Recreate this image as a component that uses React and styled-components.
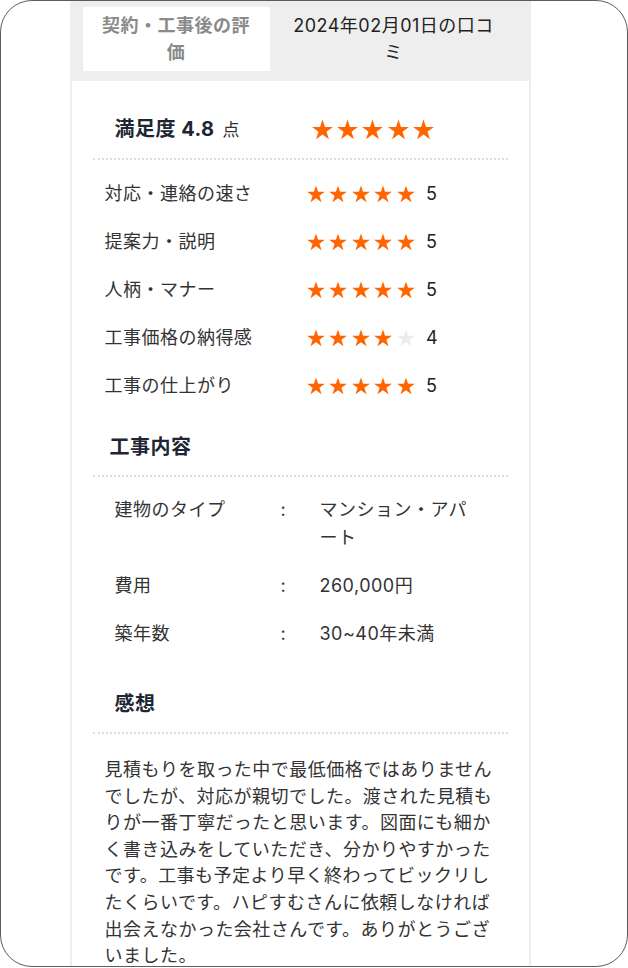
import React from "react";
import styled, { createGlobalStyle } from "styled-components";

const GlobalStyle = createGlobalStyle`
  body {
    margin: 0;
    background: #fff;
    font-family: "Inter", "Noto Sans CJK JP", sans-serif;
    letter-spacing: 0.03em;
  }
`;

const Frame = styled.div`
  box-sizing: border-box;
  width: 628px;
  height: 967px;
  border: 1.5px solid #5c5c5c;
  border-radius: 32px;
  overflow: hidden;
  background: #fff;
`;

const Column = styled.div`
  width: 461px;
  min-height: 100%;
  margin-left: 68.5px;
  background: #eeeeee;
  display: flex;
  flex-direction: column;
`;

const TabBar = styled.div`
  display: flex;
  padding: 6px 13px 0;
  margin-bottom: 10px;
`;

const Tab = styled.div`
  box-sizing: border-box;
  height: 64px;
  display: flex;
  align-items: center;
  justify-content: center;
  text-align: center;
  font-size: 18px;
  line-height: 27px;
  padding: 0 ${(p) => (p.$active ? 12 : 16)}px;
  background: ${(p) => (p.$active ? "#fff" : "transparent")};
  color: ${(p) => (p.$active ? "#8a8a8a" : "#222")};
  font-weight: ${(p) => (p.$active ? 700 : 400)};
  ${(p) => (p.$active ? "width: 187px;" : "flex: 1;")}
`;

const Card = styled.div`
  flex: 1;
  margin: 0 2px;
  padding: 0 21px;
  background: #fff;
`;

const ScoreHeader = styled.div`
  display: flex;
  align-items: center;
  padding: 34px 12px 14px 22px;
  border-bottom: 2px dotted #dcdcdc;
`;

const ScoreTitle = styled.div`
  width: 197px;
  font-size: 20px;
  line-height: 28px;
  font-weight: 700;
  color: #1e2533;
`;

const Unit = styled.span`
  margin-left: 8px;
  font-size: 17px;
  font-weight: 400;
  color: #333;
`;

const Stars = styled.div`
  display: flex;
  align-items: center;
  gap: ${(p) => p.$gap}px;
`;

const RatingList = styled.div`
  padding-top: 10px;
`;

const RatingRow = styled.div`
  display: flex;
  align-items: center;
  padding: 10px 0 10px 12px;
  font-size: 18px;
  line-height: 28px;
  color: #333;
`;

const RatingLabel = styled.div`
  width: 202px;
`;

const Score = styled.span`
  margin-left: 11px;
  color: #222;
`;

const SectionTitle = styled.h3`
  margin: 0;
  padding: 23px 0 14px ${(p) => p.$indent}px;
  font-size: 20px;
  line-height: 28px;
  font-weight: 700;
  color: #1e2533;
  border-bottom: 2px dotted #dcdcdc;
`;

const DetailTable = styled.div`
  display: flex;
  flex-direction: column;
  gap: 20px;
  padding: 19px 0 19px 22px;
`;

const DetailRow = styled.div`
  display: grid;
  grid-template-columns: 166px 39px 160px;
  font-size: 18px;
  line-height: 28px;
  color: #333;
`;

const Comment = styled.p`
  margin: 0;
  width: 400px;
  padding: 23px 0 0 12px;
  font-size: 18px;
  line-height: 26.6px;
  color: #333;
`;

const STAR_POINTS =
  "12,0.5 14.81,9.13 23.89,9.14 16.55,14.48 19.35,23.11 12,17.78 4.65,23.11 7.45,14.48 0.11,9.14 9.19,9.13";

const Star = ({ size, filled }) => (
  <svg width={size} height={size} viewBox="0 0 24 24">
    <polygon points={STAR_POINTS} fill={filled ? "#ff6600" : "#ececec"} />
  </svg>
);

const StarRow = ({ value, size, gap }) => (
  <Stars $gap={gap}>
    {[1, 2, 3, 4, 5].map((i) => (
      <Star key={i} size={size} filled={i <= value} />
    ))}
  </Stars>
);

const ratings = [
  { label: "対応・連絡の速さ", value: 5 },
  { label: "提案力・説明", value: 5 },
  { label: "人柄・マナー", value: 5 },
  { label: "工事価格の納得感", value: 4 },
  { label: "工事の仕上がり", value: 5 },
];

const details = [
  { label: "建物のタイプ", value: "マンション・アパート" },
  { label: "費用", value: "260,000円" },
  { label: "築年数", value: "30~40年未満" },
];

export default function App() {
  return (
    <>
      <GlobalStyle />
      <Frame>
        <Column>
          <TabBar>
            <Tab $active>契約・工事後の評価</Tab>
            <Tab>2024年02月01日の口コミ</Tab>
          </TabBar>
          <Card>
            <ScoreHeader>
              <ScoreTitle>
                満足度 4.8<Unit>点</Unit>
              </ScoreTitle>
              <StarRow value={5} size={21} gap={4.4} />
            </ScoreHeader>
            <RatingList>
              {ratings.map((r) => (
                <RatingRow key={r.label}>
                  <RatingLabel>{r.label}</RatingLabel>
                  <StarRow value={r.value} size={18} gap={4.6} />
                  <Score>{r.value}</Score>
                </RatingRow>
              ))}
            </RatingList>
            <SectionTitle $indent={17}>工事内容</SectionTitle>
            <DetailTable>
              {details.map((d) => (
                <DetailRow key={d.label}>
                  <span>{d.label}</span>
                  <span>:</span>
                  <span>{d.value}</span>
                </DetailRow>
              ))}
            </DetailTable>
            <SectionTitle $indent={22}>感想</SectionTitle>
            <Comment>
              見積もりを取った中で最低価格ではありませんでしたが、対応が親切でした。渡された見積もりが一番丁寧だったと思います。図面にも細かく書き込みをしていただき、分かりやすかったです。工事も予定より早く終わってビックリしたくらいです。ハピすむさんに依頼しなければ出会えなかった会社さんです。ありがとうございました。
            </Comment>
          </Card>
        </Column>
      </Frame>
    </>
  );
}
